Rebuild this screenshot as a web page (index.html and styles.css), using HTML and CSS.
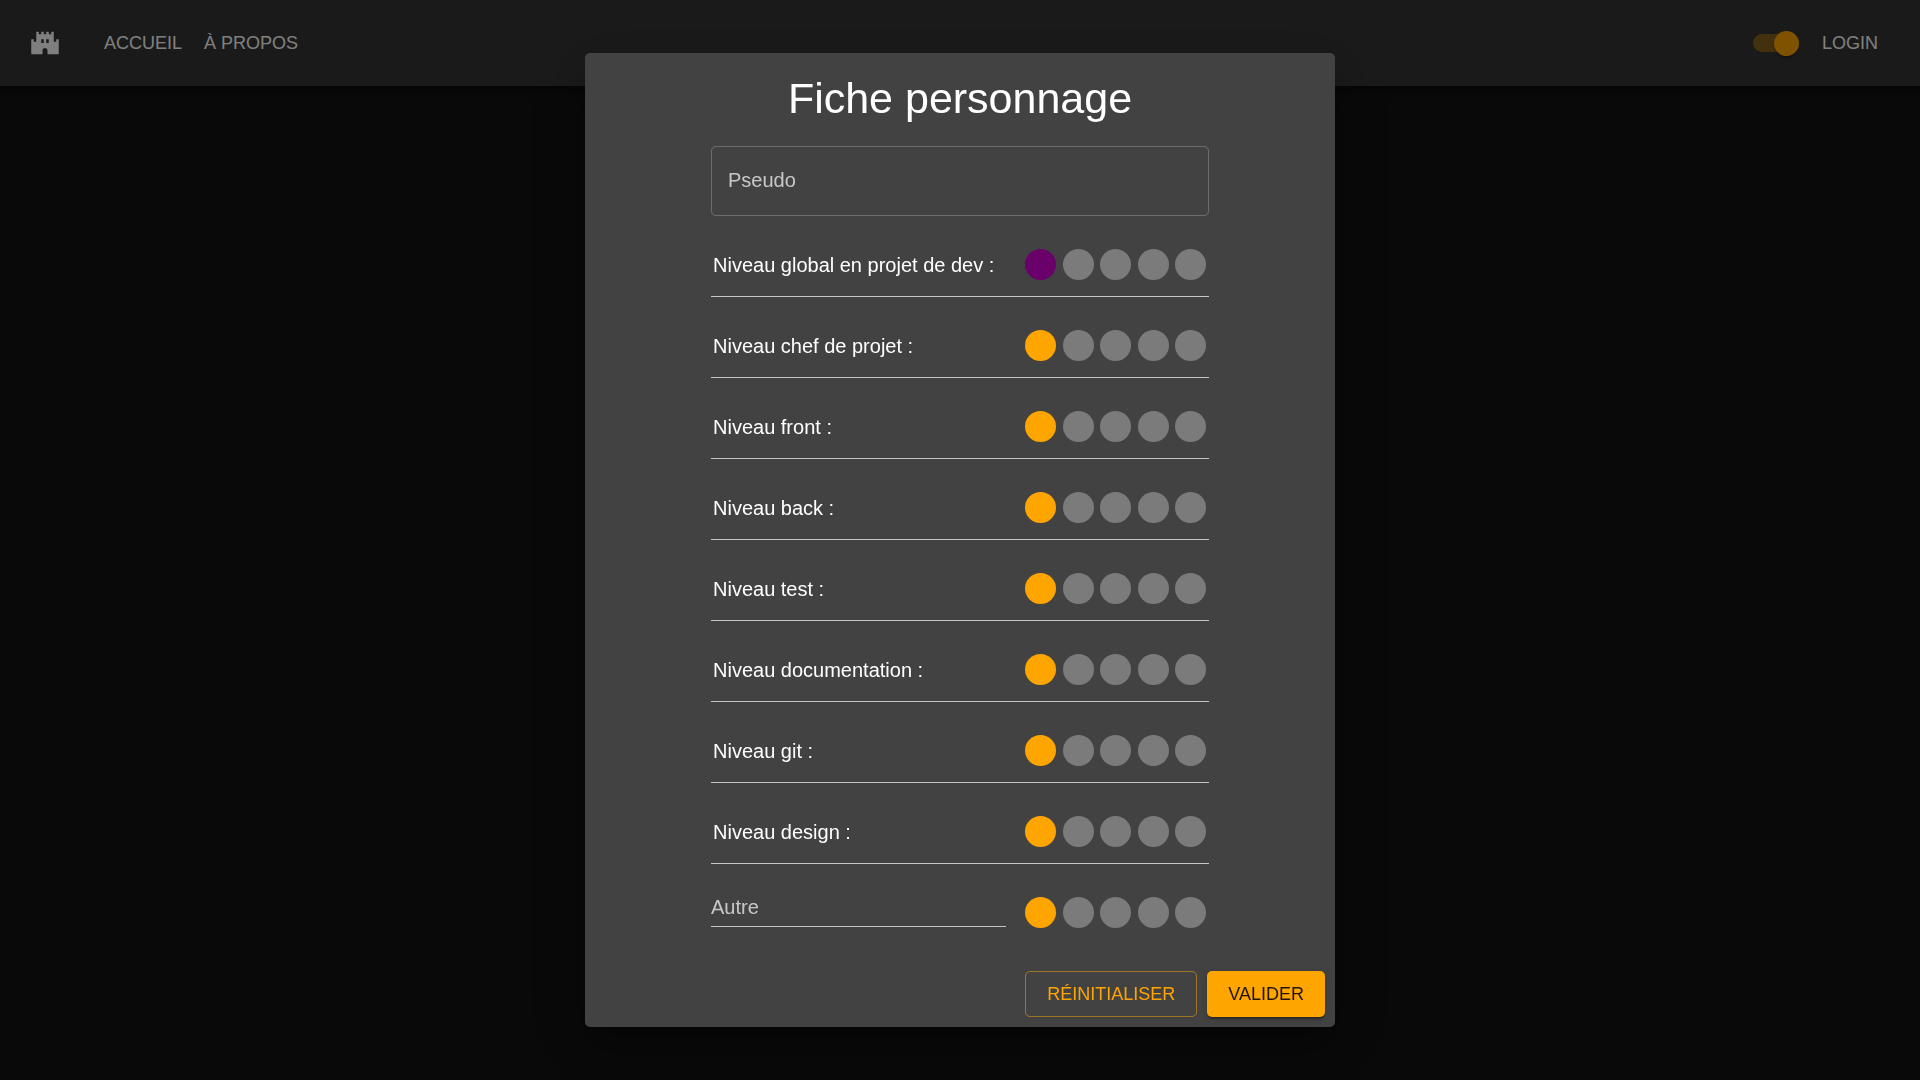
FILE: index.html
```html
<!DOCTYPE html>
<html lang="fr">
<head>
<meta charset="utf-8">
<meta name="viewport" content="width=device-width, initial-scale=1">
<title>Fiche personnage</title>
<link rel="stylesheet" href="styles.css">
</head>
<body>
<header class="app-bar">
  <a class="logo" href="#" aria-label="Château">
    <svg class="logo-icon" viewBox="0 0 24 24" aria-hidden="true"><path d="M21 9v2h-2V3h-2v2h-2V3h-2v2h-2V3H9v2H7V3H5v8H3V9H1v12h9v-3c0-1.1.9-2 2-2s2 .9 2 2v3h9V9h-2zm-10 3H9V9h2v3zm4 0h-2V9h2v3z"/></svg>
  </a>
  <nav class="nav">
    <a class="nav-link" href="#">ACCUEIL</a>
    <a class="nav-link" href="#">À PROPOS</a>
  </nav>
  <input class="switch" type="checkbox" role="switch" aria-label="Thème sombre" checked>
  <button class="login" type="button">LOGIN</button>
</header>

<div class="backdrop">
  <form class="dialog" role="dialog" aria-modal="true" aria-labelledby="dialog-title">
    <h1 class="dialog-title" id="dialog-title">Fiche personnage</h1>
    <div class="dialog-body">
      <div class="field field-outlined">
        <label class="field-label" for="pseudo">Pseudo</label>
        <input class="field-input" id="pseudo" type="text">
      </div>
      <div class="row">
        <span class="row-label" id="l-global">Niveau global en projet de dev :</span>
        <div class="rating rating-global" role="radiogroup" aria-labelledby="l-global">
          <input type="radio" name="global" aria-label="1" checked><input type="radio" name="global" aria-label="2"><input type="radio" name="global" aria-label="3"><input type="radio" name="global" aria-label="4"><input type="radio" name="global" aria-label="5">
        </div>
      </div>
      <div class="row">
        <span class="row-label" id="l-chef">Niveau chef de projet :</span>
        <div class="rating" role="radiogroup" aria-labelledby="l-chef">
          <input type="radio" name="chef" aria-label="1" checked><input type="radio" name="chef" aria-label="2"><input type="radio" name="chef" aria-label="3"><input type="radio" name="chef" aria-label="4"><input type="radio" name="chef" aria-label="5">
        </div>
      </div>
      <div class="row">
        <span class="row-label" id="l-front">Niveau front :</span>
        <div class="rating" role="radiogroup" aria-labelledby="l-front">
          <input type="radio" name="front" aria-label="1" checked><input type="radio" name="front" aria-label="2"><input type="radio" name="front" aria-label="3"><input type="radio" name="front" aria-label="4"><input type="radio" name="front" aria-label="5">
        </div>
      </div>
      <div class="row">
        <span class="row-label" id="l-back">Niveau back :</span>
        <div class="rating" role="radiogroup" aria-labelledby="l-back">
          <input type="radio" name="back" aria-label="1" checked><input type="radio" name="back" aria-label="2"><input type="radio" name="back" aria-label="3"><input type="radio" name="back" aria-label="4"><input type="radio" name="back" aria-label="5">
        </div>
      </div>
      <div class="row">
        <span class="row-label" id="l-test">Niveau test :</span>
        <div class="rating" role="radiogroup" aria-labelledby="l-test">
          <input type="radio" name="test" aria-label="1" checked><input type="radio" name="test" aria-label="2"><input type="radio" name="test" aria-label="3"><input type="radio" name="test" aria-label="4"><input type="radio" name="test" aria-label="5">
        </div>
      </div>
      <div class="row">
        <span class="row-label" id="l-doc">Niveau documentation :</span>
        <div class="rating" role="radiogroup" aria-labelledby="l-doc">
          <input type="radio" name="doc" aria-label="1" checked><input type="radio" name="doc" aria-label="2"><input type="radio" name="doc" aria-label="3"><input type="radio" name="doc" aria-label="4"><input type="radio" name="doc" aria-label="5">
        </div>
      </div>
      <div class="row">
        <span class="row-label" id="l-git">Niveau git :</span>
        <div class="rating" role="radiogroup" aria-labelledby="l-git">
          <input type="radio" name="git" aria-label="1" checked><input type="radio" name="git" aria-label="2"><input type="radio" name="git" aria-label="3"><input type="radio" name="git" aria-label="4"><input type="radio" name="git" aria-label="5">
        </div>
      </div>
      <div class="row">
        <span class="row-label" id="l-design">Niveau design :</span>
        <div class="rating" role="radiogroup" aria-labelledby="l-design">
          <input type="radio" name="design" aria-label="1" checked><input type="radio" name="design" aria-label="2"><input type="radio" name="design" aria-label="3"><input type="radio" name="design" aria-label="4"><input type="radio" name="design" aria-label="5">
        </div>
      </div>
      <div class="row row-other">
        <div class="field field-underlined">
          <label class="field-label" for="autre" id="l-autre">Autre</label>
          <input class="field-input" id="autre" type="text">
        </div>
        <div class="rating" role="radiogroup" aria-labelledby="l-autre">
          <input type="radio" name="other" aria-label="1" checked><input type="radio" name="other" aria-label="2"><input type="radio" name="other" aria-label="3"><input type="radio" name="other" aria-label="4"><input type="radio" name="other" aria-label="5">
        </div>
      </div>
    </div>
    <div class="dialog-actions">
      <button class="btn btn-outlined" type="reset">RÉINITIALISER</button>
      <button class="btn btn-contained" type="submit">VALIDER</button>
    </div>
  </form>
</div>
</body>
</html>
```

FILE: styles.css
```css
:root {
  --accent: #ffa500;
  --paper: #424242;
  --global: #6a006a;
  --line: rgba(255, 255, 255, 0.7);
}

* {
  box-sizing: border-box;
}

body {
  margin: 0;
  min-height: 100vh;
  background: #121212;
  color: #fff;
  font-family: "Liberation Sans", Arial, sans-serif;
  font-size: 20px;
  line-height: 24px;
}

button,
input {
  font: inherit;
  color: inherit;
}

.app-bar {
  display: flex;
  align-items: center;
  min-height: 86px;
  padding: 0 42px 0 30px;
  background: #353535;
  box-shadow: 0 2px 5px rgba(0, 0, 0, 0.2), 0 5px 6px rgba(0, 0, 0, 0.14), 0 1px 12px rgba(0, 0, 0, 0.12);
  font-size: 18px;
}

.logo {
  display: flex;
  margin-right: 44px;
}

.logo-icon {
  width: 30px;
  height: 30px;
  fill: #fff;
}

.nav {
  display: flex;
  flex: 1;
  gap: 22px;
}

.nav-link {
  color: #fff;
  text-decoration: none;
}

.switch {
  appearance: none;
  display: flex;
  align-items: center;
  justify-content: flex-end;
  width: 46px;
  height: 18px;
  margin: 0 23px 0 0;
  border-radius: 9px;
  background: rgba(255, 165, 0, 0.4);
}

.switch::before {
  content: "";
  flex: none;
  width: 25px;
  height: 25px;
  border-radius: 50%;
  background: var(--accent);
  box-shadow: 0 2px 2px rgba(0, 0, 0, 0.3);
}

.login {
  padding: 0;
  border: 0;
  background: none;
}

.backdrop {
  position: fixed;
  inset: 0;
  display: flex;
  align-items: center;
  justify-content: center;
  overflow: auto;
  background: rgba(0, 0, 0, 0.5);
}

.dialog {
  width: 100%;
  max-width: 750px;
  margin: auto;
  border-radius: 5px;
  background: var(--paper);
  box-shadow: 0 14px 19px -9px rgba(0, 0, 0, 0.2), 0 30px 48px 4px rgba(0, 0, 0, 0.14), 0 11px 58px 10px rgba(0, 0, 0, 0.12);
}

.dialog-title {
  margin: 0;
  padding: 19px 30px 21px;
  font-size: 43px;
  font-weight: 400;
  line-height: 53px;
  text-align: center;
}

.dialog-body {
  max-width: 498px;
  margin: 0 auto;
}

.field {
  display: grid;
  align-items: center;
}

.field-label,
.field-input {
  grid-area: 1 / 1;
}

.field-label {
  color: rgba(255, 255, 255, 0.7);
  pointer-events: none;
}

.field-input {
  width: 100%;
  padding: 0;
  border: 0;
  outline: 0;
  background: none;
}

.field-outlined {
  height: 70px;
  padding: 0 16px;
  border: 1px solid rgba(255, 255, 255, 0.23);
  border-radius: 5px;
}

.field-outlined .field-label {
  padding-bottom: 2px;
}

.field-underlined {
  width: 295px;
  height: 40px;
  margin-bottom: 1px;
  border-bottom: 1px solid var(--line);
}

.row {
  display: flex;
  align-items: center;
  justify-content: space-between;
  padding: 33px 3px 16px 2px;
  border-bottom: 1px solid var(--line);
}

.row-other {
  align-items: flex-end;
  padding: 23px 3px 33px 0;
  border-bottom: 0;
}

.rating {
  display: flex;
  justify-content: space-between;
  width: 181px;
}

.rating input {
  appearance: none;
  width: 31px;
  height: 31px;
  margin: 0;
  border-radius: 50%;
  background: #7b7b7b;
}

.rating input:checked {
  background: var(--accent);
}

.rating-global input:checked {
  background: var(--global);
}

.dialog-actions {
  display: flex;
  justify-content: flex-end;
  gap: 10px;
  padding: 10px;
}

.btn {
  height: 46px;
  padding: 0 21px;
  border: 0;
  border-radius: 5px;
  font-size: 18px;
}

.btn-outlined {
  border: 1px solid rgba(255, 165, 0, 0.5);
  background: none;
  color: var(--accent);
}

.btn-contained {
  background: var(--accent);
  color: rgba(0, 0, 0, 0.87);
  box-shadow: 0 4px 1px -2px rgba(0, 0, 0, 0.2), 0 2px 2px rgba(0, 0, 0, 0.14), 0 1px 6px rgba(0, 0, 0, 0.12);
}
```
